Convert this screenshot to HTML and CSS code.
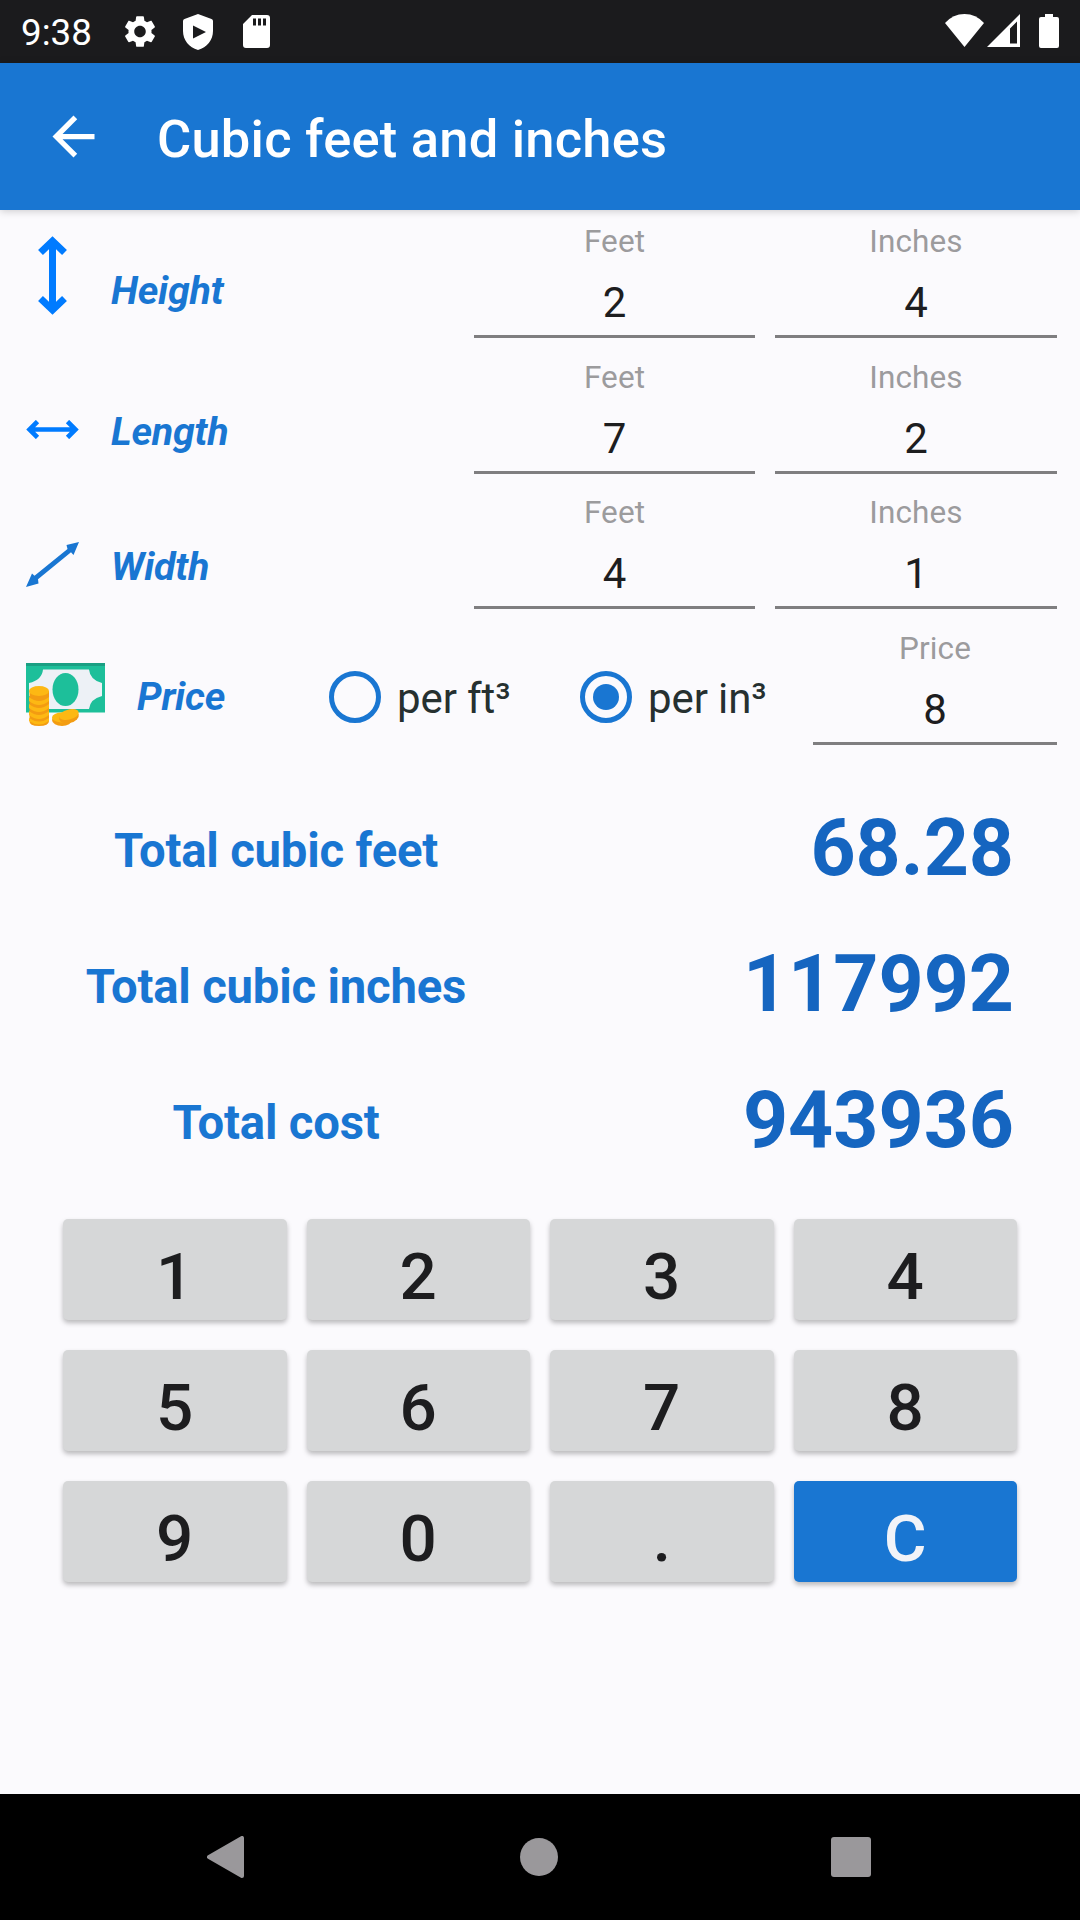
FILE: index.html
```html
<!DOCTYPE html>
<html lang="en">
<head>
  <meta charset="UTF-8">
  <title>Cubic feet and inches</title>
  <link rel="stylesheet" href="styles.css">
</head>
<body>
  <!-- Status bar -->
  <div class="status-bar">
    <span class="clock">9:38</span>
    <svg class="gear" viewBox="2 2 20 20"><path fill="#fff" d="M19.14 12.94c.04-.3.06-.61.06-.94 0-.32-.02-.64-.07-.94l2.03-1.58c.18-.14.23-.41.12-.61l-1.92-3.32c-.12-.22-.37-.29-.59-.22l-2.39.96c-.5-.38-1.03-.7-1.62-.94l-.36-2.54c-.04-.24-.24-.41-.48-.41h-3.84c-.24 0-.43.17-.47.41l-.36 2.54c-.59.24-1.13.57-1.62.94l-2.39-.96c-.22-.08-.47 0-.59.22L2.74 8.87c-.12.21-.08.47.12.61l2.03 1.58c-.05.3-.09.63-.09.94s.02.64.07.94l-2.03 1.58c-.18.14-.23.41-.12.61l1.92 3.32c.12.22.37.29.59.22l2.39-.96c.5.38 1.03.7 1.62.94l.36 2.54c.05.24.24.41.48.41h3.84c.24 0 .44-.17.47-.41l.36-2.54c.59-.24 1.13-.56 1.62-.94l2.39.96c.22.08.47 0 .59-.22l1.92-3.32c.12-.22.07-.47-.12-.61l-2.01-1.58zM12 15.6c-1.98 0-3.6-1.62-3.6-3.6s1.62-3.6 3.6-3.6 3.6 1.62 3.6 3.6-1.62 3.6-3.6 3.6z"/></svg>
    <svg class="shield" viewBox="0 0 30 36"><path fill="#fff" fill-rule="evenodd" d="M15 0L28.500 5Q30 5.600 30 7V17C30 26 24 33.500 15 36C6 33.500 0 26 0 17V7Q0 5.600 1.500 5ZM10 11.500V24.500L23 18Z"/></svg>
    <svg class="sd-card" viewBox="0 0 27 33"><path fill="#fff" fill-rule="evenodd" d="M9 0H24Q27 0 27 3V30Q27 33 24 33H3Q0 33 0 30V9ZM10 3.500V10.500H13V3.500ZM15 3.500V10.500H18V3.500ZM20 3.500V10.500H23V3.500Z"/></svg>
    <span class="spacer"></span>
    <svg class="wifi" viewBox="0 0 39 33"><path fill="#fff" d="M0 9Q8 0 19.500 0T39 9L19.500 33Z"/></svg>
    <svg class="signal" viewBox="0 0 33 33"><path fill="#fff" fill-rule="evenodd" d="M33 0V33H0ZM30 7.500L23 14.500V29.500H30Z"/></svg>
    <svg class="battery" viewBox="0 0 20 34"><path fill="#fff" d="M6 0H14V3H18Q20 3 20 5V32Q20 34 18 34H2Q0 34 0 32V5Q0 3 2 3H6Z"/></svg>
  </div>

  <!-- Title bar -->
  <header class="app-bar">
    <svg class="back" viewBox="0 0 24 24"><path fill="#fff" d="M20 11H7.830l5.590-5.590L12 4l-8 8 8 8 1.410-1.410L7.830 13H20v-2z"/></svg>
    <h1>Cubic feet and inches</h1>
  </header>

  <main>
    <!-- Measurements -->
    <section class="form">
      <div class="row row-height">
        <svg class="icon" viewBox="0 0 53 79"><path fill="none" stroke="#007bff" stroke-width="7" d="M26.500 4V75M14.500 16.500L26.500 5L38.500 16.500M14.500 62.500L26.500 74L38.500 62.500"/></svg>
        <span class="name">Height</span>
        <div class="field"><label>Feet</label><div class="value">2</div></div>
        <div class="field"><label>Inches</label><div class="value">4</div></div>
      </div>
      <div class="row row-length">
        <svg class="icon" viewBox="0 0 53 19"><path fill="none" stroke="#007bff" stroke-width="4.600" d="M3 9.500H50M11.500 1.500L3.500 9.500L11.500 17.500M41.500 1.500L49.500 9.500L41.500 17.500"/></svg>
        <span class="name">Length</span>
        <div class="field"><label>Feet</label><div class="value">7</div></div>
        <div class="field"><label>Inches</label><div class="value">2</div></div>
      </div>
      <div class="row row-width">
        <svg class="icon" viewBox="0 0 53 45"><path fill="#1976d2" d="M53 0L47.500 13L45 10.300L12 37.300L12.500 41.500L0 45L6 31.500L8.500 33.700L41.500 7L40.500 3Z"/></svg>
        <span class="name">Width</span>
        <div class="field"><label>Feet</label><div class="value">4</div></div>
        <div class="field"><label>Inches</label><div class="value">1</div></div>
      </div>
      <div class="row row-price">
        <svg class="icon" viewBox="0 0 79 63">
          <path fill="#1dbf9a" d="M0 0H79V49.500H0Z"/>
          <path fill="#1a9f83" d="M0 0H79V3H0Z"/>
          <path fill="#edf1f6" d="M17 6.500H63Q64 17 76 20V33Q64 36 63 46H17Q16 36 3 33V20Q16 17 17 6.500Z"/>
          <ellipse cx="39.500" cy="26.500" rx="13" ry="16.500" fill="#1dbf9a"/>
          <path fill="#f39c12" d="M3.500 28H23V58Q23 63 13 63T3.500 58Z"/>
          <g fill="#fdb813">
            <ellipse cx="13" cy="28" rx="10" ry="5"/>
            <path d="M3 34Q13 42 23 34V38Q13 46 3 38ZM3 41Q13 49 23 41V45Q13 53 3 45ZM3 48Q13 56 23 48V52Q13 60 3 52ZM3 55Q13 62 23 55V58Q13 65 3 58Z"/>
          </g>
          <ellipse cx="36" cy="57" rx="10" ry="6" fill="#f39c12"/>
          <ellipse cx="36" cy="54.500" rx="10" ry="5" fill="#fdb813"/>
          <ellipse cx="43" cy="54" rx="10" ry="6" transform="rotate(-14 43 54)" fill="#f39c12"/>
          <ellipse cx="43" cy="51.500" rx="10" ry="5" transform="rotate(-14 43 51.500)" fill="#fdb813"/>
        </svg>
        <span class="name">Price</span>
        <div class="radio"><span class="circle"></span><span class="unit">per ft³</span></div>
        <div class="radio"><span class="circle checked"></span><span class="unit">per in³</span></div>
        <div class="field"><label>Price</label><div class="value">8</div></div>
      </div>
    </section>

    <!-- Results -->
    <section class="totals">
      <div class="total"><h2>Total cubic feet</h2><strong>68.28</strong></div>
      <div class="total"><h2>Total cubic inches</h2><strong>117992</strong></div>
      <div class="total"><h2>Total cost</h2><strong>943936</strong></div>
    </section>

    <!-- Number pad -->
    <section class="keypad">
      <button>1</button>
      <button>2</button>
      <button>3</button>
      <button>4</button>
      <button>5</button>
      <button>6</button>
      <button>7</button>
      <button>8</button>
      <button>9</button>
      <button>0</button>
      <button>.</button>
      <button class="clear">C</button>
    </section>
  </main>

  <!-- System navigation -->
  <nav class="nav-bar">
    <svg class="nav-back" viewBox="0 0 37 42"><path fill="#9a989b" stroke="#9a989b" stroke-width="4" stroke-linejoin="round" d="M35 2V40L2 21Z"/></svg>
    <span class="nav-home"></span>
    <span class="nav-recent"></span>
  </nav>
</body>
</html>
```
FILE: styles.css
```css
* {
  box-sizing: border-box;
}

body {
  margin: 0;
  width: 1080px;
  height: 1920px;
  display: flex;
  flex-direction: column;
  overflow: hidden;
  font-family: Roboto, sans-serif;
  background: #fbfafd;
}

svg {
  display: block;
  flex: none;
}

/* Status bar */
.status-bar {
  height: 63px;
  display: flex;
  align-items: center;
  padding: 0 21px;
  background: #1b1b1d;
  color: #fff;
}

.clock {
  width: 103px;
  font-size: 36.75px;
  line-height: 63px;
  padding-top: 2px;
}

.gear {
  width: 32px;
  height: 33px;
}

.shield {
  width: 30px;
  height: 36px;
  margin-left: 27px;
}

.sd-card {
  width: 27px;
  height: 33px;
  margin-left: 30px;
}

.spacer {
  flex: 1;
}

.wifi {
  width: 39px;
  height: 33px;
  margin-bottom: 2px;
}

.signal {
  width: 33px;
  height: 33px;
  margin-left: 3px;
  margin-bottom: 2px;
}

.battery {
  width: 20px;
  height: 34px;
  margin-left: 19px;
  margin-bottom: 1px;
}

/* Title bar */
.app-bar {
  height: 147px;
  display: flex;
  align-items: center;
  padding-left: 42px;
  background: #1976d2;
  color: #fff;
  box-shadow: 0 1px 8px rgba(0, 0, 0, 0.2);
}

.back {
  width: 63px;
  height: 63px;
}

h1 {
  margin: 4px 0 0 52px;
  font-size: 52.5px;
  font-weight: 500;
  letter-spacing: 0.2px;
}

main {
  flex: 1;
}

/* Measurements */
.row {
  height: 135.5px;
  display: flex;
  align-items: flex-start;
  padding: 0 23px 0 26px;
}

.icon {
  width: 53px;
}

.name {
  flex: 1;
  margin-left: 32px;
  font-size: 39.4px;
  line-height: 46px;
  font-weight: bold;
  font-style: italic;
  letter-spacing: -0.25px;
  color: #1976d2;
}

.row-height .icon {
  margin-top: 26px;
}

.row-height .name {
  margin-top: 57.5px;
}

.row-length .icon {
  margin-top: 74.5px;
}

.row-length .name {
  margin-top: 63px;
}

.row-width .icon {
  margin-top: 61px;
}

.row-width .name {
  margin-top: 62.5px;
}

.row-price .icon {
  width: 79px;
  margin-top: 46.5px;
}

.row-price .name {
  margin-top: 57px;
}

.field {
  width: 281px;
  margin-left: 20px;
  padding-top: 12px;
  text-align: center;
}

.field:last-child {
  width: 282px;
}

.row-price .field {
  width: 244px;
  margin-left: 0;
}

.field label {
  display: block;
  font-size: 31.5px;
  line-height: 40px;
  letter-spacing: 0.1px;
  color: #9c9b9d;
}

.value {
  padding-top: 8px;
  font-size: 42px;
  line-height: 65px;
  color: #1d1d1f;
  border-bottom: 3px solid #7f7e80;
}

.radio {
  width: 251px;
  display: flex;
  align-items: center;
  margin-top: 53px;
  font-size: 42px;
  line-height: 52px;
  color: #263030;
}

.radio + .radio {
  width: 233px;
}

.unit {
  padding-top: 3px;
  letter-spacing: -0.1px;
}

.circle {
  width: 52px;
  height: 52px;
  margin-right: 16px;
  border: 5.2px solid #1976d2;
  border-radius: 50%;
}

.circle.checked {
  padding: 8px;
  background: #1976d2 content-box;
}

/* Results */
.totals {
  padding-top: 32px;
}

.total {
  height: 136px;
  display: flex;
  padding-right: 66px;
}

.total h2 {
  width: 552px;
  margin: 0;
  font-size: 47.25px;
  font-weight: bold;
  line-height: 134px;
  letter-spacing: -0.2px;
  text-align: center;
  color: #1976d2;
}

.total strong {
  flex: 1;
  font-size: 78.75px;
  line-height: 129px;
  text-align: right;
  color: #1565c0;
}

/* Number pad */
.keypad {
  display: grid;
  grid-template-columns: repeat(4, 1fr);
  grid-auto-rows: 101px;
  gap: 30px 20px;
  padding: 27px 63px 0;
}

.keypad button {
  padding: 0;
  border: none;
  border-radius: 5px;
  background: #d6d7d8;
  box-shadow: 0 3px 5px rgba(0, 0, 0, 0.26);
  font-family: inherit;
  font-size: 65.6px;
  font-weight: 500;
  line-height: 115px;
  color: #1d1d1f;
}

.keypad .clear {
  background: #1976d2;
  color: #f1f3f8;
}

/* System navigation */
.nav-bar {
  height: 126px;
  display: flex;
  align-items: center;
  justify-content: space-between;
  padding: 0 209px 0 207px;
  background: #000;
}

.nav-back {
  width: 37px;
  height: 42px;
}

.nav-home {
  width: 38px;
  height: 38px;
  margin-left: 3px;
  border-radius: 50%;
  background: #9a989b;
}

.nav-recent {
  width: 40px;
  height: 40px;
  border-radius: 3px;
  background: #9a989b;
}
```
